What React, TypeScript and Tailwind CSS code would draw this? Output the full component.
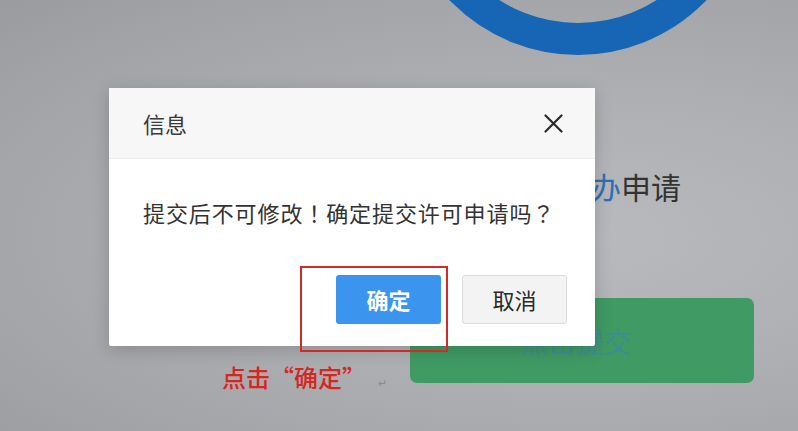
import React from "react";

export default function App() {
  return (
    <div
      className="relative w-[798px] h-[431px] overflow-hidden bg-[radial-gradient(ellipse_at_72%_55%,#b9babd_0%,#afb0b3_40%,#a2a3a6_80%,#9a9b9e_100%)]"
      style={{ fontFamily: '"Noto Sans CJK SC", "Noto Sans", sans-serif' }}
    >
      {/* underlying page */}
      <div className="ml-[410px] w-[344px] flex flex-col">
        <svg width="356" height="56" viewBox="0 0 356 56" className="ml-[-12px] block">
          <circle cx="180" cy="-123" r="162" fill="none" stroke="#1766b6" strokeWidth="32" />
        </svg>
        <div className="mt-[110px] ml-[121px] text-[30px] leading-[40px] text-[#333] whitespace-nowrap">
          <span className="text-[#2d6fb5]">网上办</span>申请
        </div>
        <div className="mt-[92px] h-[85px] rounded-[7px] bg-[#409a63] flex items-center justify-center">
          <span className="text-[28px] text-[#3a8c9c] opacity-80 ml-[-12px]">点击提交</span>
        </div>
      </div>

      {/* dialog */}
      <div className="absolute left-[109px] top-[88px] w-[486px] h-[258px] bg-white rounded-[2px] shadow-[0_4px_18px_rgba(0,0,0,0.18)] flex flex-col">
        <div className="h-[71px] bg-[#f7f7f8] border-b border-[#ececec] flex items-center justify-between pl-[34px] pr-[32px]">
          <span className="text-[22px] text-[#3a3a3a]">信息</span>
          <svg width="19" height="19" viewBox="0 0 19 19">
            <path d="M1.5 1.5 L17.5 17.5 M17.5 1.5 L1.5 17.5" stroke="#2a2a2a" strokeWidth="2.2" strokeLinecap="round" />
          </svg>
        </div>
        <div
          className="pt-[38px] pl-[34px] text-[22px] leading-[30px] tracking-[0.9px] text-[#333] whitespace-nowrap"
          style={{ fontFamily: '"Noto Sans CJK TC", "Noto Sans CJK SC", sans-serif' }}
        >
          提交后不可修改！确定提交许可申请吗？
        </div>
        <div className="mt-[48px] flex justify-end gap-[21px] pr-[28px]">
          <div className="w-[105px] h-[49px] rounded-[3px] bg-[#3b95ee] text-white text-[22px] font-bold flex items-center justify-center">
            确定
          </div>
          <div className="w-[105px] h-[49px] rounded-[3px] bg-[#f3f3f4] border border-[#dcdcdc] text-[#2a2a2a] text-[22px] flex items-center justify-center">
            取消
          </div>
        </div>
      </div>

      {/* annotations */}
      <div className="absolute left-[300px] top-[266px] w-[148px] h-[86px] border-2 border-[#d42a24]" />
      <div className="absolute left-[222px] top-[362px] flex items-end">
        <span className="text-[24px] leading-[30px] font-medium text-[#d7261e]">点击“确定”</span>
        <span className="ml-[12px] mb-[2px] text-[11px] text-[#8a8a8a]">↵</span>
      </div>
    </div>
  );
}
